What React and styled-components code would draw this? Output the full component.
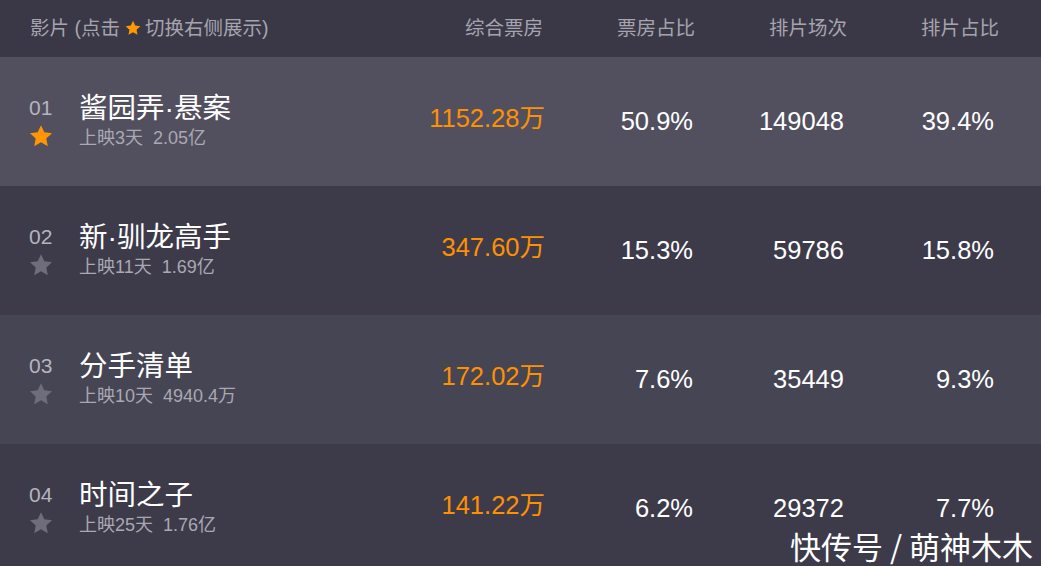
import React from 'react';
import styled, { createGlobalStyle } from 'styled-components';

const movies = [
    { rank: '01', name: '酱园弄·悬案', days: '上映3天', total: '2.05亿', box: '1152.28万', boxRate: '50.9%', shows: '149048', showRate: '39.4%', active: true },
    { rank: '02', name: '新·驯龙高手', days: '上映11天', total: '1.69亿', box: '347.60万', boxRate: '15.3%', shows: '59786', showRate: '15.8%' },
    { rank: '03', name: '分手清单', days: '上映10天', total: '4940.4万', box: '172.02万', boxRate: '7.6%', shows: '35449', showRate: '9.3%' },
    { rank: '04', name: '时间之子', days: '上映25天', total: '1.76亿', box: '141.22万', boxRate: '6.2%', shows: '29372', showRate: '7.7%' },
];

const rowColors = ['#52505f', '#3d3b4a', '#464554', '#3d3b4a'];

function Star({ size, color }) {
    return (
        <svg width={size} height={size} viewBox="0 0 24 24">
            <path
                fill={color}
                d="M12 1.2l3.3 7.1 7.7.9-5.7 5.3 1.5 7.7L12 18.3l-6.8 3.9 1.5-7.7L1 9.2l7.7-.9z"
            />
        </svg>
    );
}

function App() {
    return (
        <Page>
            <GlobalStyle />
            <HeaderRow>
                <HeaderName>
                    影片 (点击
                    <HeaderStar>
                        <Star size={16} color="#ff9900" />
                    </HeaderStar>
                    切换右侧展示)
                </HeaderName>
                <HeaderCell>综合票房</HeaderCell>
                <HeaderCell>票房占比</HeaderCell>
                <HeaderCell>排片场次</HeaderCell>
                <HeaderCell>排片占比</HeaderCell>
            </HeaderRow>
            {movies.map((m, i) => (
                <Row key={m.rank} $bg={rowColors[i]}>
                    <NameCell>
                        <RankCol>
                            <Rank>{m.rank}</Rank>
                            <Star size={24} color={m.active ? '#ff9500' : '#6f6d7b'} />
                        </RankCol>
                        <Info>
                            <Title>{m.name}</Title>
                            <Sub>
                                {m.days}
                                <SubTotal>{m.total}</SubTotal>
                            </Sub>
                        </Info>
                    </NameCell>
                    <BoxValue $inset={-2}>{m.box}</BoxValue>
                    <Value $inset={2}>{m.boxRate}</Value>
                    <Value $inset={3}>{m.shows}</Value>
                    <Value $inset={5}>{m.showRate}</Value>
                </Row>
            ))}
            <Watermark>快传号 / 萌神木木</Watermark>
        </Page>
    );
}

const GlobalStyle = createGlobalStyle`
    html, body {
        margin: 0;
        padding: 0;
        background: #3d3b4a;
        overflow: hidden;
    }
`;

const Page = styled.div`
    position: relative;
    width: 1041px;
    height: 566px;
    overflow: hidden;
    background: #3d3b4a;
    font-family: "Liberation Sans", "Noto Sans CJK SC", sans-serif;
`;

const gridCols = `
    display: grid;
    grid-template-columns: 361px 152px 152px 152px 152px;
    padding: 0 42px 0 30px;
    box-sizing: border-box;
`;

const HeaderRow = styled.div`
    ${gridCols}
    height: 57px;
    align-items: center;
    background: #3a3846;
    color: #a6a4ae;
    font-size: 19.5px;
    padding-bottom: 4px;
`;

const HeaderName = styled.div`
    display: flex;
    align-items: center;
    font-size: 19.5px;
`;

const HeaderStar = styled.span`
    display: inline-flex;
    margin: 2px 4px 0 5px;
`;

const HeaderCell = styled.div`
    text-align: right;
`;

const Row = styled.div`
    ${gridCols}
    height: 129px;
    align-items: center;
    background: ${(p) => p.$bg};
`;

const NameCell = styled.div`
    display: flex;
    align-items: flex-start;
`;

const RankCol = styled.div`
    width: 50px;
    display: flex;
    flex-direction: column;
    gap: 4px;
    padding-top: 5px;
    margin-left: -1px;
`;

const Rank = styled.div`
    font-size: 21px;
    line-height: 24px;
    color: #b6b4be;
`;

const Info = styled.div`
    display: flex;
    flex-direction: column;
`;

const Title = styled.div`
    font-size: 28.5px;
    line-height: 34px;
    color: #fff;
`;

const Sub = styled.div`
    font-size: 18px;
    line-height: 27px;
    color: #aaa8b2;
`;

const SubTotal = styled.span`
    margin-left: 10px;
`;

const Value = styled.div`
    text-align: right;
    font-size: 25.5px;
    color: #fff;
    margin-right: ${(p) => p.$inset || 0}px;
`;

const BoxValue = styled(Value)`
    color: #ff9000;
    padding-bottom: 12px;
`;

const Watermark = styled.div`
    position: absolute;
    right: 8px;
    bottom: 2px;
    font-family: "Noto Sans CJK SC", sans-serif;
    font-size: 31px;
    line-height: 36px;
    color: #fff;
`;

export default App;
